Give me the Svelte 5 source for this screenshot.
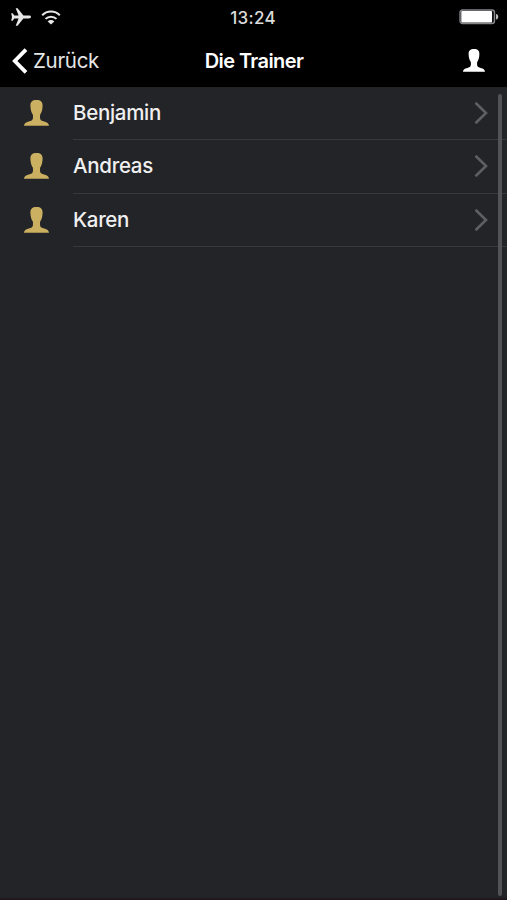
<script>
  const trainers = ["Benjamin", "Andreas", "Karen"]
</script>

{#snippet person()}
  <svg class="person" viewBox="0 0 25 26">
    <path d="M12.500 0C8.200 0 6.300 1.900 6.400 5.800c.1 4 1 6.700 2.500 9 .3 3.400.1 5.200-1.700 5.900C4.600 21.800.4 21.900 0 25.700h25c-.4-3.800-4.600-3.900-7.200-5-1.800-.7-2-2.500-1.700-5.900 1.500-2.300 2.400-5 2.500-9C18.700 1.900 16.800 0 12.500 0z" />
  </svg>
{/snippet}

<div class="screen">
  <header>
    <div class="status">
      <div class="signals">
        <svg class="plane" viewBox="0 0 20 18">
          <path d="M20 9c0-.9-.9-1.400-2.200-1.400h-5.400L6.600.2H4.700l2.900 7.400H3.300L1.700 5.200H.2L1 9l-.8 3.800h1.500l1.600-2.400h4.300l-2.900 7.400h1.900l5.800-7.400h5.400c1.300 0 2.200-.5 2.200-1.400z" />
        </svg>
        <svg class="wifi" viewBox="0 0 20 15">
          <path class="arc" d="M1.200 5.200a12.500 12.500 0 0 1 17.600 0M4.500 8.900a7.800 7.800 0 0 1 11 0" />
          <path d="M10 14.500l-3.300-3.100a4.500 4.500 0 0 1 6.600 0z" />
        </svg>
      </div>
      <span class="time">13:24</span>
      <svg class="battery" viewBox="0 0 40 16">
        <rect class="case" x="1" y="1" width="34.500" height="13.500" rx="2.500" />
        <rect x="2.300" y="2" width="30.700" height="11.500" rx=".8" />
        <path class="tip" d="M37 5c1.500.3 2.300 1.400 2.300 2.800s-.8 2.500-2.300 2.800z" />
      </svg>
    </div>
    <nav>
      <button class="back">
        <svg viewBox="0 0 16 26"><path d="M14 1.700L2.800 13 14 24.300" /></svg>
        <span>Zurück</span>
      </button>
      <h1>Die Trainer</h1>
      <button class="profile" aria-label="Profil">{@render person()}</button>
    </nav>
  </header>
  <ul>
    {#each trainers as name}
      <li>
        {@render person()}
        <div class="cell">
          <span>{name}</span>
          <svg class="chevron" viewBox="0 0 14 24"><path d="M1.500 1.800L12 12 1.500 22.200" /></svg>
        </div>
      </li>
    {/each}
  </ul>
  <div class="scrollbar"></div>
</div>

<style>
  :global(body) {
    margin: 0;
    background: #232427;
  }
  .screen {
    position: relative;
    height: 900px;
    box-sizing: border-box;
    overflow: hidden;
    background: #232427;
    border-bottom: 2px solid #21181f;
    color: #f0f0f1;
    font-family: Inter, "Liberation Sans", sans-serif;
  }
  svg {
    display: block;
    fill: currentColor;
  }
  header {
    height: 87px;
    background: #000;
    color: #fff;
  }
  .status {
    display: grid;
    grid-template-columns: 1fr auto 1fr;
    align-items: center;
    height: 34px;
    padding: 0 8px 0 11px;
  }
  .signals {
    display: flex;
    align-items: center;
    gap: 10px;
    color: #e8e8e8;
  }
  .plane {
    width: 20px;
    height: 18px;
  }
  .wifi {
    width: 20px;
    height: 15px;
  }
  .arc {
    fill: none;
    stroke: currentColor;
    stroke-width: 2;
  }
  .time {
    margin-right: 4px;
    padding-top: 1px;
    color: #dcdcdc;
    font-size: 17px;
    font-weight: 500;
    letter-spacing: 0.3px;
  }
  .battery {
    width: 40px;
    height: 16px;
    justify-self: end;
  }
  .case {
    fill: #111;
    stroke: #85858a;
    stroke-width: 1.4;
  }
  .tip {
    fill: #b8b8ba;
  }
  nav {
    display: grid;
    grid-template-columns: 1fr auto 1fr;
    align-items: center;
    height: 53px;
    padding: 0 22px 0 12px;
  }
  button {
    padding: 0;
    border: 0;
    background: none;
    color: inherit;
    font: inherit;
  }
  .back {
    display: flex;
    align-items: center;
    gap: 5px;
    color: #e6e6e6;
    font-size: 20.5px;
    letter-spacing: -0.3px;
  }
  .back svg {
    width: 16px;
    height: 26px;
    fill: none;
    stroke: #fff;
    stroke-width: 3.8;
  }
  h1 {
    margin: 0 0 0 11px;
    font-size: 20px;
    font-weight: 600;
    letter-spacing: -0.6px;
  }
  .profile {
    justify-self: end;
  }
  .profile .person {
    width: 22px;
    height: 23px;
  }
  ul {
    margin: 0;
    padding: 0;
    list-style: none;
  }
  li {
    display: flex;
    align-items: center;
    height: 53.7px;
    padding-left: 24px;
  }
  li:first-child {
    height: 53px;
  }
  li .person {
    width: 25px;
    height: 26px;
    padding-bottom: 1px;
    color: #cbb062;
  }
  .cell {
    flex: 1;
    display: flex;
    align-items: center;
    justify-content: space-between;
    height: 100%;
    margin-left: 24px;
    padding-right: 19px;
    box-sizing: border-box;
    border-bottom: 1px solid #38393c;
    font-size: 20.5px;
    font-weight: 500;
    letter-spacing: -0.3px;
  }
  .cell span {
    padding-bottom: 2px;
  }
  .chevron {
    width: 14px;
    height: 24px;
    fill: none;
    stroke: #5e5f62;
    stroke-width: 2.6;
  }
  .scrollbar {
    position: absolute;
    top: 94px;
    right: 5px;
    width: 4px;
    height: 802px;
    border-radius: 2px;
    background: #525356;
  }
</style>
